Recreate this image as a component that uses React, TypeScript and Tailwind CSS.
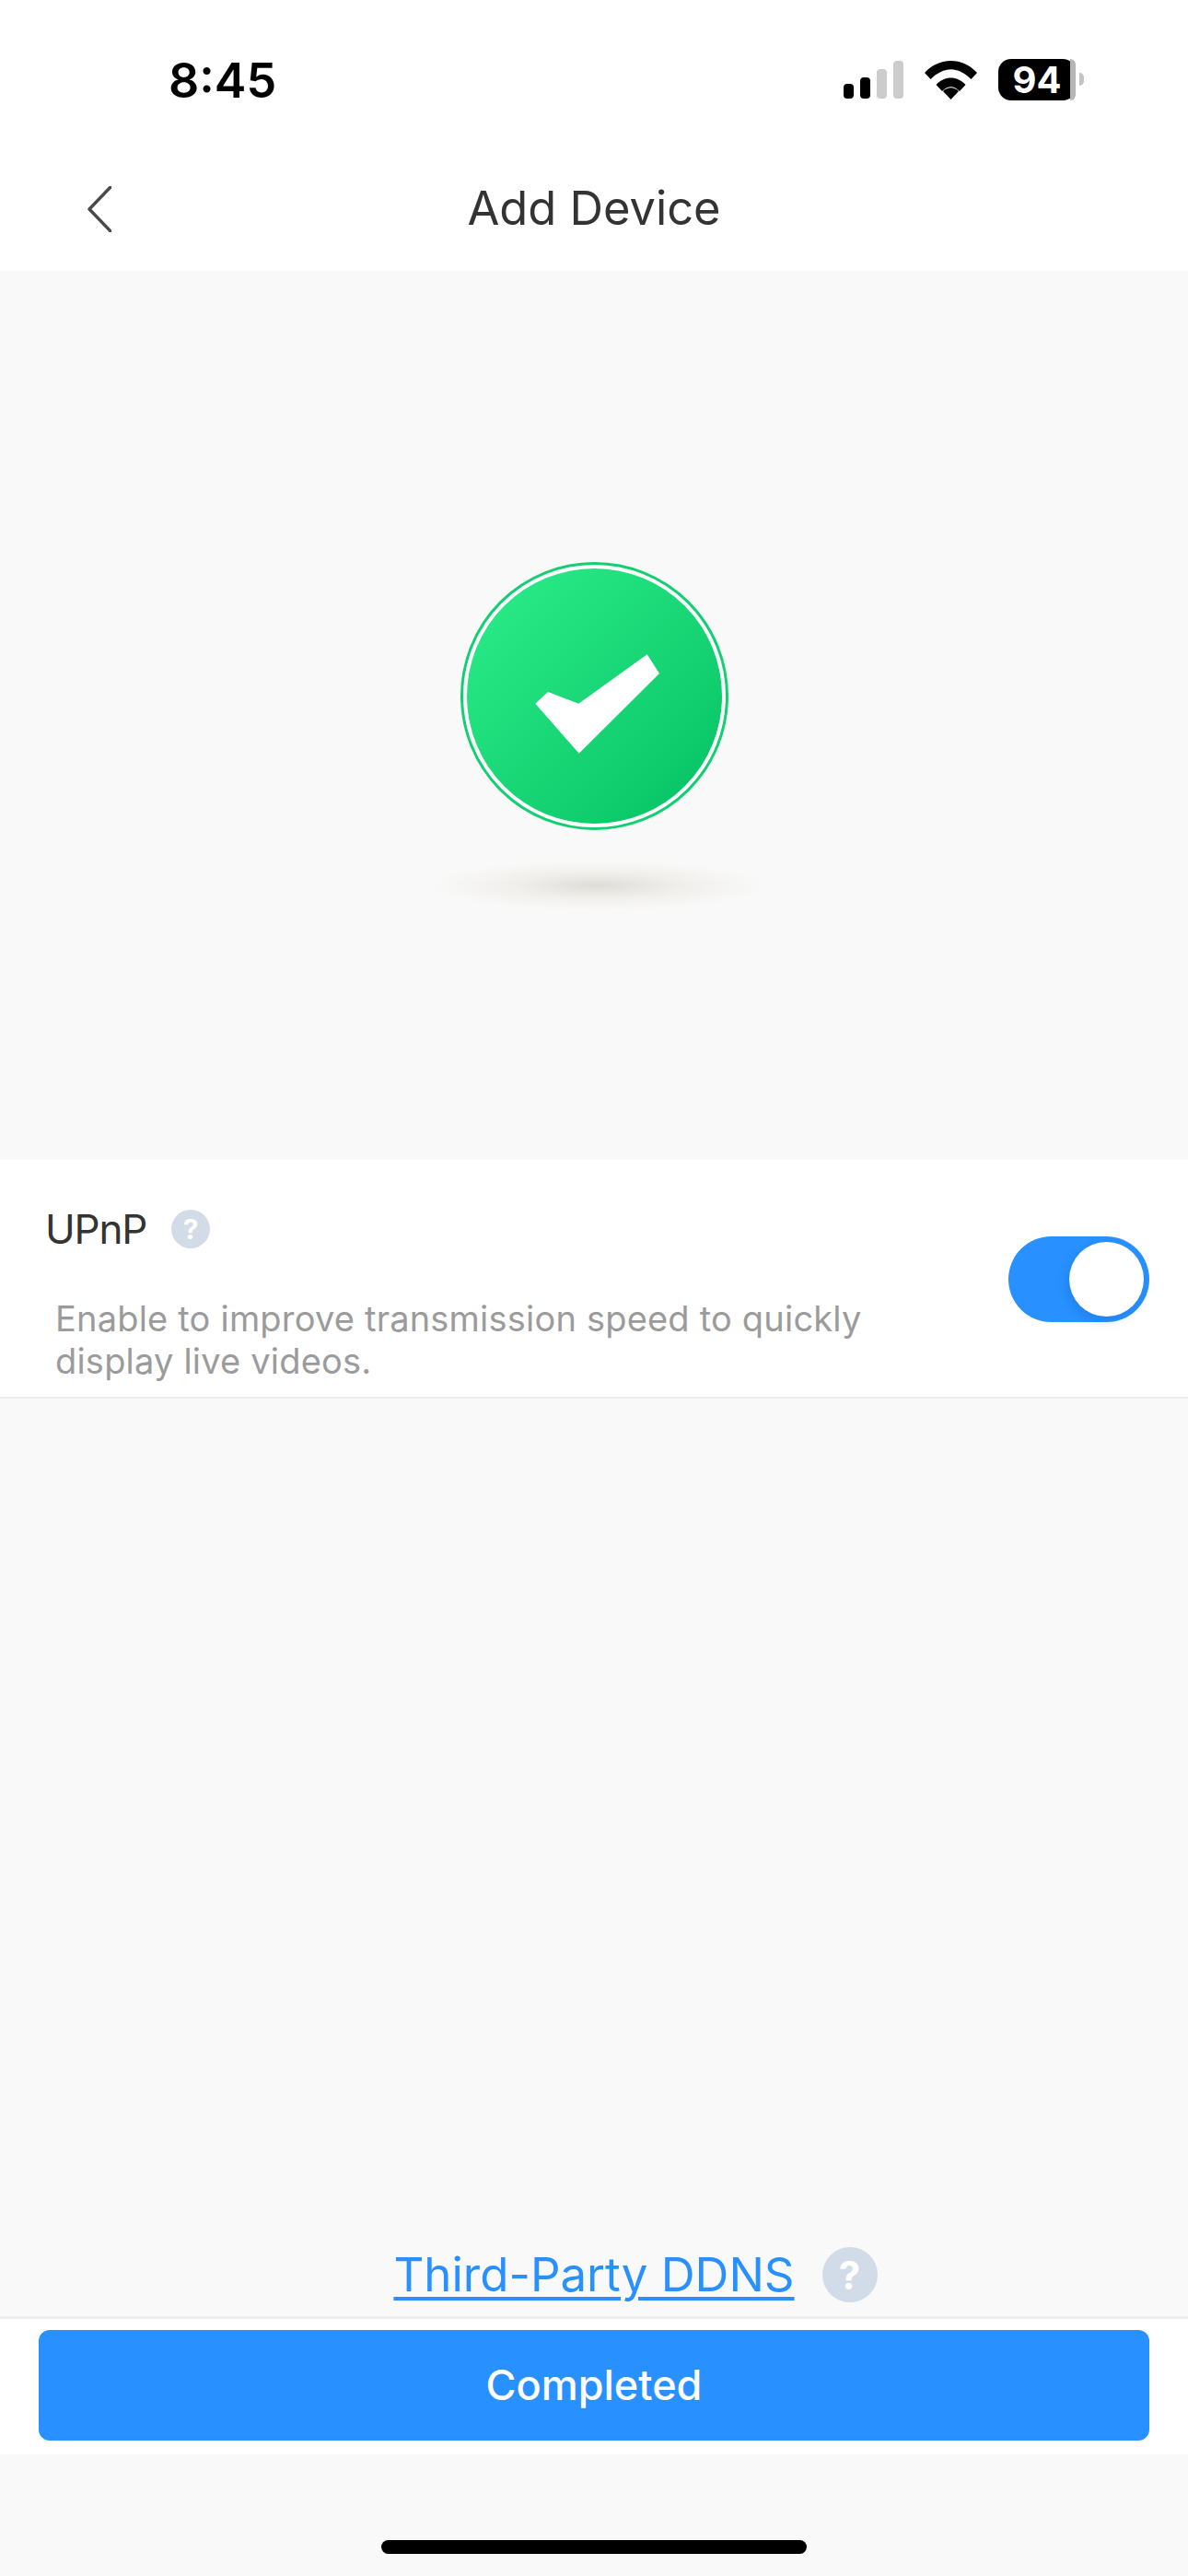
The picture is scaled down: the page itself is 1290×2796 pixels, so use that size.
import React from "react";

function Help({ size, text }: { size: string; text: string }) {
  return (
    <span className={`flex items-center justify-center rounded-full bg-[#d2dce8] font-bold text-white ${size} ${text}`}>?</span>
  );
}

export default function App() {
  return (
    <div className="flex h-[2796px] w-[1290px] flex-col overflow-hidden bg-[#f9f9f9] font-['Inter',sans-serif]">
      <header className="h-[294px] shrink-0 bg-white">
        <div className="flex h-[174px] items-start justify-between pl-[183px] pr-[122px] pt-[56px]">
          <span className="text-[52px] font-semibold leading-[64px] text-black">8:45</span>
          <div className="flex items-center pt-[8px]">
            <svg width="65" height="41" viewBox="0 0 65 41" className="mr-[23px]">
              <rect x="0" y="25" width="11" height="16" rx="4" fill="#000" />
              <rect x="18" y="18" width="11" height="23" rx="4" fill="#000" />
              <rect x="36" y="9" width="11" height="32" rx="4" fill="#ccc" />
              <rect x="54" y="0" width="11" height="41" rx="4" fill="#ccc" />
            </svg>
            <svg width="57" height="42" viewBox="0 0 57 42" className="mr-[23px]">
              <path d="M0 13 C16 -4.3 41 -4.3 57 13 L50.5 20 C36 5.5 21 5.5 6.5 20 Z" fill="#000" />
              <path d="M12.5 26 C21.5 16 35.5 16 44.5 26 L38 33 C32 26.5 25 26.5 19 33 Z" fill="#000" />
              <path d="M20 33 C25 28 32 28 37 33 L28.5 42 Z" fill="#000" />
            </svg>
            <div className="relative flex h-[45px] w-[84px] items-center justify-center rounded-[14px] bg-black text-[40px] font-bold leading-none text-white">
              94
              <span className="absolute bottom-0 right-0 top-0 w-[6px] rounded-r-[14px] bg-[#b5b5b5]" />
              <span className="absolute -right-[9px] top-[15px] h-[14px] w-[5px] rounded-r-[5px] bg-[#c4c4c4]" />
            </div>
          </div>
        </div>
        <div className="relative flex h-[120px] items-start justify-center">
          <svg width="26" height="50" viewBox="0 0 26 50" className="absolute left-[95px] top-[28px]">
            <path d="M25 1 L2 25 L25 49" fill="none" stroke="#4a4a4a" strokeWidth="3.4" strokeLinecap="round" strokeLinejoin="round" />
          </svg>
          <h1 className="pt-[20px] text-[50.6px] font-normal leading-[64px] text-[#333]">Add Device</h1>
        </div>
      </header>

      <section className="flex h-[965px] shrink-0 flex-col items-center pt-[316px]">
        <div className="flex h-[291px] w-[291px] items-center justify-center rounded-full border-[3px] border-[#12d072] bg-white">
          <div className="flex h-[277px] w-[277px] items-center justify-center rounded-full bg-gradient-to-br from-[#2bef8b] to-[#00c062]">
            <svg width="135" height="108" viewBox="0 0 135 108" className="ml-[6px] mt-[16px]">
              <polygon points="0.3,53.7 14,41 47.3,53.7 121.7,0.3 135,21 47.7,107.7" fill="#fff" />
            </svg>
          </div>
        </div>
        <div className="ml-[8px] mt-[30px] h-[60px] w-[400px] rounded-full bg-[radial-gradient(closest-side,#e0ddd8,#f0efec_45%,#f9f9f9_90%)]" />
      </section>

      <section className="flex h-[259px] shrink-0 items-start justify-between border-b-2 border-[#eeeeee] bg-white pl-[49px] pr-[42px]">
        <div>
          <div className="flex items-center gap-[27px] pt-[54px]">
            <span className="text-[44px] leading-[42px] tracking-[-1.2px] text-[#333]">UPnP</span>
            <Help size="h-[42px] w-[42px]" text="text-[30px]" />
          </div>
          <p className="ml-[11px] mt-[53px] w-[960px] text-[38px] leading-[46px] tracking-[0.2px] text-[#9b9b9b]">
            Enable to improve transmission speed to quickly
            <br />
            display live videos.
          </p>
        </div>
        <div className="mt-[83px] flex h-[93px] w-[153px] items-center justify-end rounded-full bg-[#2891ff] pr-[6px]">
          <span className="h-[81px] w-[81px] rounded-full bg-white shadow-[-3px_5px_12px_rgba(0,70,160,0.2)]" />
        </div>
      </section>

      <section className="flex flex-1 items-end justify-center pb-[15px] pl-[90px]">
        <div className="flex items-center gap-[30px]">
          <a className="text-[51px] leading-[60px] text-[#2891ff] underline decoration-[4px] underline-offset-[6px]">Third-Party DDNS</a>
          <Help size="h-[60px] w-[60px]" text="text-[42px]" />
        </div>
      </section>

      <section className="h-[150px] shrink-0 border-t-[3px] border-[#eeeeee] bg-white px-[42px] pt-[12px]">
        <button className="flex h-[120px] w-full items-center justify-center rounded-[12px] bg-[#2891ff] text-[45px] font-medium text-white">Completed</button>
      </section>

      <div className="flex h-[132px] shrink-0 justify-center pt-[93px]">
        <span className="h-[15px] w-[462px] rounded-full bg-black" />
      </div>
    </div>
  );
}
